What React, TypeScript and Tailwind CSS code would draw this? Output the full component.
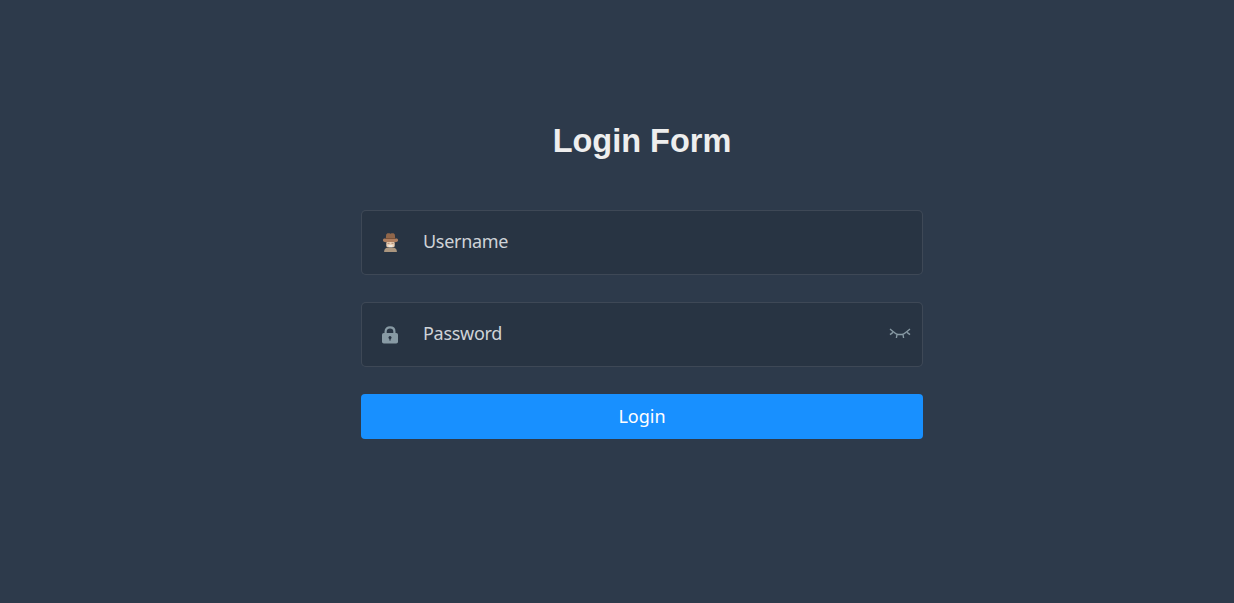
function DetectiveIcon() {
  return (
    <svg width="17" height="19" viewBox="0 0 16 19" className="shrink-0">
      <path d="M3.2 7 L3.6 2 C3.8 .2 6 0 8 .8 C10 0 12.2 .2 12.4 2 L12.8 7 Z" fill="#90664a" />
      <path d="M3.5 5 L12.5 5 L12.6 6.4 L3.4 6.4 Z" fill="#7a5239" />
      <path d="M.4 7 C.9 5.4 2.4 5.2 3.4 6 L12.6 6 C13.6 5.2 15.1 5.4 15.6 7 C15.7 8.6 14 9.2 12.6 9.2 L3.4 9.2 C2 9.2 .3 8.6 .4 7 Z" fill="#ad7d5e" />
      <rect x="3.8" y="9" width="8.4" height="5" rx="1" fill="#e9cdb2" />
      <rect x="5" y="9.8" width="2" height="1" fill="#a58670" />
      <rect x="9" y="9.8" width="2" height="1" fill="#a58670" />
      <rect x="6" y="12" width="4" height="2.4" fill="#ece7e0" />
      <path d="M1.6 19 C1.6 15.6 4 14.6 5.6 14.6 L10.4 14.6 C12 14.6 14.4 15.6 14.4 19 Z" fill="#ab967f" />
    </svg>
  )
}

function LockIcon() {
  return (
    <svg width="18" height="18" viewBox="0 0 18 18" className="shrink-0">
      <path d="M4.6 8 L4.6 5.4 C4.6 2.8 6.6 1.4 9 1.4 C11.4 1.4 13.4 2.8 13.4 5.4 L13.4 8" fill="none" stroke="#889aa4" strokeWidth="2.2" />
      <rect x="1" y="7" width="16" height="10.5" rx="1.8" fill="#889aa4" />
      <circle cx="9" cy="11.4" r="1.5" fill="#283443" />
      <rect x="8.4" y="11.6" width="1.2" height="3" fill="#283443" />
    </svg>
  )
}

function ClosedEyeIcon() {
  return (
    <svg width="22" height="13" viewBox="0 0 22 13" fill="none" stroke="#889aa4" strokeWidth="1.4" className="shrink-0">
      <path d="M1 1 C5 4 7 6.5 9 6.5 L13 6.5 C15 6.5 17 4 21 1" />
      <path d="M4 4.4 L1 6.6" />
      <path d="M18 4.4 L21 6.6" />
      <path d="M8 6.5 L7.4 10" />
      <path d="M14 6.5 L14.6 10" />
    </svg>
  )
}

export default function App() {
  return (
    <div className="min-h-[603px] bg-[#2d3a4b] pl-[50px] font-['Noto_Sans','Open_Sans',sans-serif]">
      <form className="mx-auto w-[562px] pt-[121px]">
        <h1 className="mb-[49px] text-center font-['Liberation_Sans',Arial,sans-serif] text-[32.5px] leading-[40px] font-bold text-[#eeeeee]">
          Login Form
        </h1>

        <div className="mb-[27px] flex h-[65px] items-center rounded-[5px] border border-white/10 bg-black/10">
          <div className="flex w-[61px] shrink-0 justify-center pr-[5px]">
            <DetectiveIcon />
          </div>
          <input
            className="mb-[3px] h-[60px] flex-1 bg-transparent text-[18px] tracking-[-0.3px] text-[#eeeeee] outline-none placeholder:text-[#cfd3d8]"
            placeholder="Username"
          />
        </div>

        <div className="mb-[27px] flex h-[65px] items-center rounded-[5px] border border-white/10 bg-black/10 pr-[11px]">
          <div className="flex w-[61px] shrink-0 justify-center pr-[5px]">
            <LockIcon />
          </div>
          <input
            type="password"
            className="mb-[3px] h-[60px] flex-1 bg-transparent text-[18px] tracking-[-0.3px] text-[#eeeeee] outline-none placeholder:text-[#cfd3d8]"
            placeholder="Password"
          />
          <ClosedEyeIcon />
        </div>

        <button
          type="button"
          className="h-[45px] w-full rounded-[4px] bg-[#1890ff] text-[18px] text-white"
        >
          Login
        </button>
      </form>
    </div>
  )
}
